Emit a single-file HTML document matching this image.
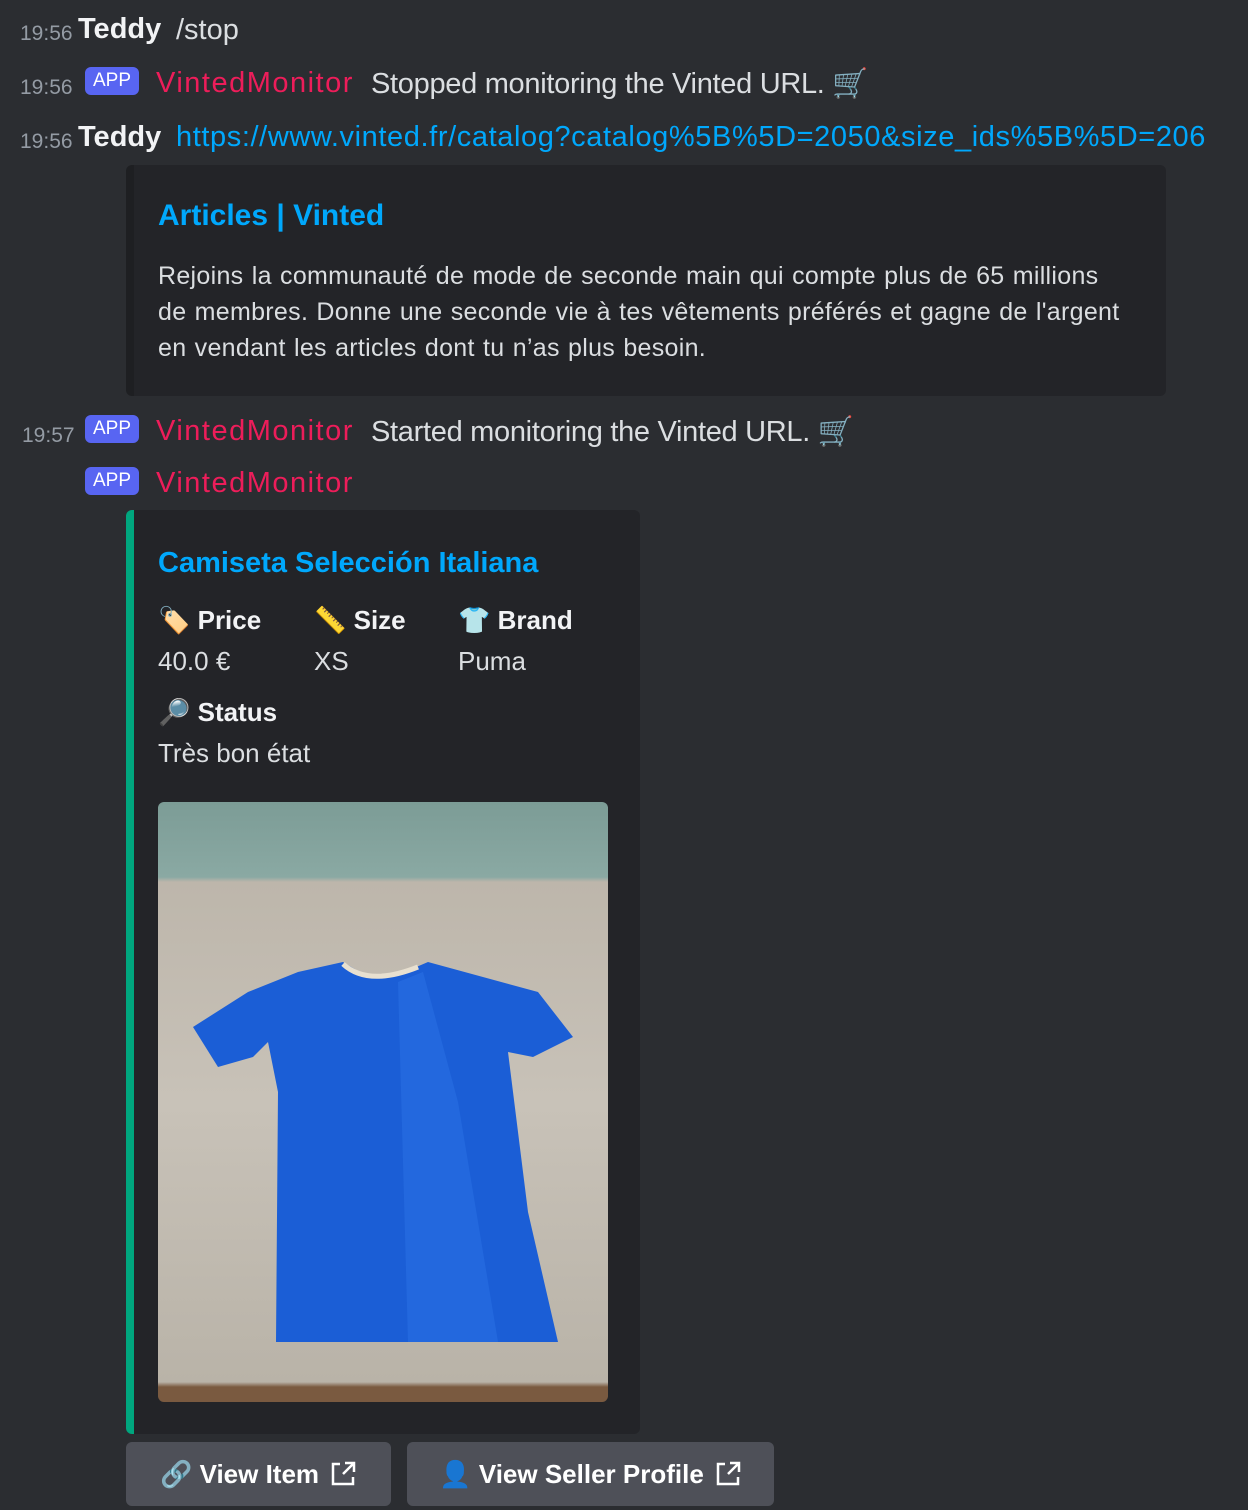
<!DOCTYPE html>
<html><head><meta charset="utf-8"><style>
body{margin:0;width:1248px;height:1510px;background:#2b2d31;font-family:"Liberation Sans",sans-serif;color:#dbdee1;overflow:hidden;position:relative}
.a{position:absolute;white-space:nowrap}
.ts{font-size:21px;color:#949ba4}
.n{font-size:29px;color:#f2f3f5;font-weight:bold}
.t{font-size:29px;color:#dbdee1}
.app{background:#5865f2;color:#fff;font-size:19px;border-radius:6px;padding:3px 8px;}
.vm{font-size:29px;color:#ed1d5a;letter-spacing:1.5px}
.b{font-weight:bold;color:#f2f3f5;font-size:26px}
.v{font-size:26px;color:#dbdee1}
.btn{position:absolute;top:1442px;height:64px;background:#4e5058;border-radius:6px;color:#fff;font-size:26px;font-weight:bold;display:flex;align-items:center;justify-content:center;gap:10px}
</style></head><body>
<div class="a ts" style="left:20px;top:22px">19:56</div><div class="a n" style="left:78px;top:13px">Teddy</div><div class="a t" style="left:176px;top:14px">/stop</div>
<div class="a ts" style="left:20px;top:76px">19:56</div><div class="a app" style="left:85px;top:67px">APP</div><div class="a vm" style="left:156px;top:67px">VintedMonitor</div><div class="a t" style="left:371px;top:67px;letter-spacing:-0.3px">Stopped monitoring the Vinted URL. 🛒</div>
<div class="a ts" style="left:20px;top:130px">19:56</div><div class="a n" style="left:78px;top:121px">Teddy</div><div class="a t" style="left:176px;top:121px;color:#00a8fc;width:1045px;overflow:hidden;letter-spacing:0.6px">https://www.vinted.fr/catalog?catalog%5B%5D=2050&amp;size_ids%5B%5D=206</div>
<div class="a" style="left:126px;top:165px;width:1040px;height:231px;background:#232428;border-left:8px solid #1e1f22;border-radius:6px;box-sizing:border-box"></div>
<div class="a" style="left:158px;top:199px;font-size:30px;font-weight:bold;color:#00a8fc">Articles | Vinted</div>
<div class="a" style="left:158px;top:258px;font-size:25px;line-height:36px;color:#dbdee1;white-space:normal;width:975px;letter-spacing:0.3px;word-spacing:1px">Rejoins la communauté de mode de seconde main qui compte plus de 65 millions de membres. Donne une seconde vie à tes vêtements préférés et gagne de l'argent en vendant les articles dont tu n’as plus besoin.</div>
<div class="a ts" style="left:22px;top:424px">19:57</div><div class="a app" style="left:85px;top:415px">APP</div><div class="a vm" style="left:156px;top:415px">VintedMonitor</div><div class="a t" style="left:371px;top:415px;letter-spacing:-0.3px">Started monitoring the Vinted URL. 🛒</div>
<div class="a app" style="left:85px;top:467px">APP</div><div class="a vm" style="left:156px;top:467px">VintedMonitor</div>
<div class="a" style="left:126px;top:510px;width:514px;height:924px;background:#232428;border-left:8px solid #00a67e;border-radius:6px;box-sizing:border-box"></div>
<div class="a" style="left:158px;top:547px;font-size:29px;font-weight:bold;color:#00a8fc">Camiseta Selección Italiana</div>
<div class="a b" style="left:158px;top:605px">🏷️ Price</div><div class="a v" style="left:158px;top:646px">40.0 €</div>
<div class="a b" style="left:314px;top:605px">📏 Size</div><div class="a v" style="left:314px;top:646px">XS</div>
<div class="a b" style="left:458px;top:605px">👕 Brand</div><div class="a v" style="left:458px;top:646px">Puma</div>
<div class="a b" style="left:158px;top:697px">🔎 Status</div><div class="a v" style="left:158px;top:738px">Très bon état</div>
<div class="a" style="left:158px;top:802px;width:450px;height:600px;border-radius:6px;overflow:hidden;background:linear-gradient(#7c9c96 0,#8aa9a3 75px,#bdb6ab 80px,#c8c2b8 300px,#b9b3a8 580px,#7a5a40 585px)">
<svg width="450" height="600" viewBox="0 0 450 600"><path d="M185 160 L140 170 L90 190 L35 225 L60 265 L95 255 L110 240 L120 290 L118 540 L400 540 L370 410 L350 250 L375 255 L415 235 L380 190 L270 160 L235 175 L210 175 Z" fill="#1b5ed6"/><path d="M240 180 L265 170 L300 300 L340 540 L250 540 Z" fill="#2a6fe3" opacity=".6"/><path d="M185 162 Q210 185 260 165" stroke="#e8e0d0" stroke-width="5" fill="none"/></svg></div>
<div class="btn" style="left:126px;width:265px">🔗 View Item <svg width="28" height="28" viewBox="0 0 28 28" fill="none" stroke="#fff" stroke-width="2.5"><path d="M11 4H4v20h20v-7M16 3h9v9M25 3L14 14"/></svg></div>
<div class="btn" style="left:407px;width:367px">👤 View Seller Profile <svg width="28" height="28" viewBox="0 0 28 28" fill="none" stroke="#fff" stroke-width="2.5"><path d="M11 4H4v20h20v-7M16 3h9v9M25 3L14 14"/></svg></div>
</body></html>
